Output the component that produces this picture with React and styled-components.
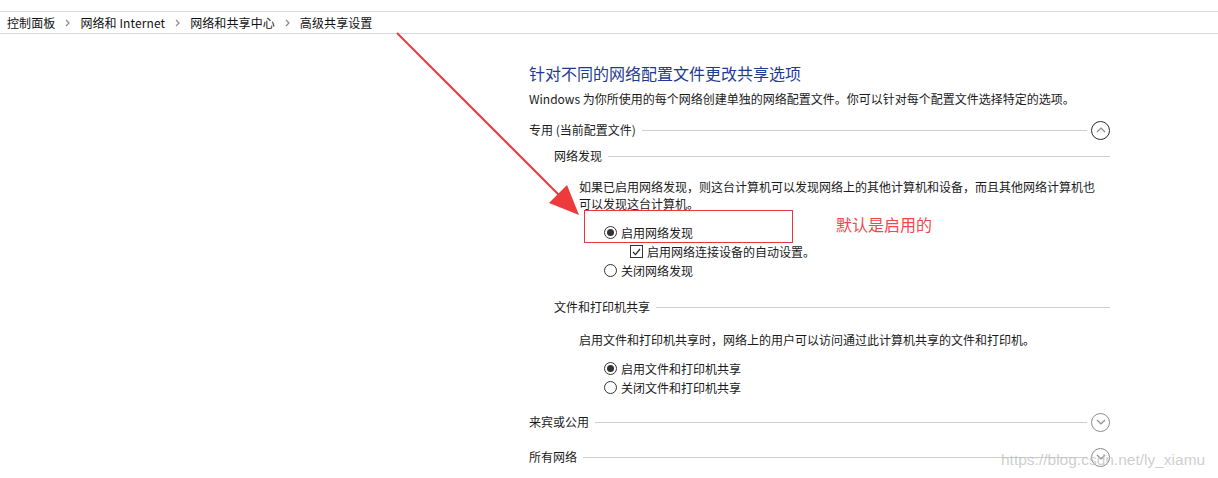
import React from 'react';
import styled, { createGlobalStyle } from 'styled-components';

const GlobalStyle = createGlobalStyle`
	html, body {
		margin: 0;
		padding: 0;
		background: #fff;
	}
	body {
		font-family: "Noto Sans CJK SC", "Noto Sans", "Liberation Sans", sans-serif;
		font-size: 12px;
		color: #1a1a1a;
	}
`;

const Page = styled.div`
	position: relative;
	width: 1218px;
	height: 478px;
	overflow: hidden;
`;

const Breadcrumb = styled.nav`
	margin-top: 11px;
	height: 21px;
	border-top: 1px solid #d9d9d9;
	border-bottom: 1px solid #d9d9d9;
	display: flex;
	align-items: center;
	padding-left: 7px;
	font-size: 12px;
	color: #111;
`;

const Crumb = styled.span`
	line-height: 20px;
	letter-spacing: 0.1px;
`;

const CrumbSep = styled.span`
	display: inline-flex;
	align-items: center;
	padding: 0 10px 0 10px;
	color: #8a8a8a;
`;

const Content = styled.main`
	margin-left: 529px;
	width: 581px;
`;

const Title = styled.h1`
	margin: 28px 0 0;
	font-size: 16px;
	font-weight: normal;
	line-height: 22px;
	color: #1f3a93;
`;

const Desc = styled.p`
	margin: 6px 0 0;
	line-height: 18px;
	white-space: nowrap;
`;

const Header = styled.div`
	display: flex;
	align-items: center;
	height: 20px;
	margin-top: ${(p) => p.$top}px;
	padding-left: ${(p) => p.$indent || 0}px;
`;

const HeaderLabel = styled.span`
	white-space: nowrap;
	line-height: 20px;
`;

const Rule = styled.span`
	flex: 1;
	height: 1px;
	background: #cfcfcf;
	margin-left: 6px;
`;

const Toggle = styled.span`
	width: 17px;
	height: 17px;
	margin-left: 4px;
	border-radius: 50%;
	border: 1.5px solid ${(p) => (p.$open ? '#2b2b2b' : '#8d8d8d')};
	display: flex;
	align-items: center;
	justify-content: center;
	flex-shrink: 0;
`;

const Para = styled.p`
	margin: ${(p) => p.$top}px 0 0 50px;
	line-height: 17px;
`;

const Options = styled.div`
	position: relative;
	margin: ${(p) => p.$top}px 0 0 75px;
`;

const Option = styled.label`
	display: flex;
	align-items: center;
	height: 19px;
	padding-left: ${(p) => p.$indent || 0}px;
	white-space: nowrap;
`;

const Radio = styled.span`
	width: 11px;
	height: 11px;
	border-radius: 50%;
	border: 1px solid #333;
	margin-right: 4px;
	display: flex;
	align-items: center;
	justify-content: center;
	&::after {
		content: '';
		width: 7px;
		height: 7px;
		border-radius: 50%;
		background: #333;
		display: ${(p) => (p.$checked ? 'block' : 'none')};
	}
`;

const Check = styled.span`
	width: 11px;
	height: 11px;
	border: 1px solid #333;
	margin-right: 4px;
	display: flex;
	align-items: center;
	justify-content: center;
`;

const Highlight = styled.div`
	position: absolute;
	left: -20px;
	top: -13px;
	width: 207px;
	height: 31px;
	border: 1px solid #e8383d;
	pointer-events: none;
`;

const Note = styled.span`
	position: absolute;
	left: 232px;
	top: -9px;
	font-size: 16px;
	line-height: 20px;
	color: #f2484b;
	white-space: nowrap;
`;

const Sub = styled.div`
	padding-left: 25px;
`;

const Arrow = styled.svg`
	position: absolute;
	left: 0;
	top: 0;
	pointer-events: none;
`;

const Watermark = styled.span`
	position: absolute;
	left: 1001px;
	top: 450px;
	font-family: "Liberation Sans", Arial, sans-serif;
	font-size: 15.5px;
	line-height: 20px;
	color: rgba(190, 190, 190, 0.75);
	white-space: nowrap;
`;

function Chevron() {
	return (
		<svg width="5" height="8" viewBox="0 0 5 8">
			<path d="M1 1l3 3-3 3" fill="none" stroke="currentColor" strokeWidth="1.2" />
		</svg>
	);
}

function CircleToggle({ open }) {
	return (
		<Toggle $open={open}>
			<svg width="10" height="6" viewBox="0 0 10 6">
				<path
					d={open ? 'M1 5l4-4 4 4' : 'M1 1l4 4 4-4'}
					fill="none"
					stroke={open ? '#8a8a8a' : '#8d8d8d'}
					strokeWidth="1.2"
				/>
			</svg>
		</Toggle>
	);
}

function CheckMark() {
	return (
		<svg width="9" height="8" viewBox="0 0 9 8">
			<path d="M1 4l2.5 2.6L8 1" fill="none" stroke="#222" strokeWidth="1.2" />
		</svg>
	);
}

const crumbs = ['控制面板', '网络和 Internet', '网络和共享中心', '高级共享设置'];

export default function App() {
	return (
		<Page>
			<GlobalStyle />
			<Breadcrumb>
				{crumbs.map((c, i) => (
					<React.Fragment key={c}>
						{i > 0 && (
							<CrumbSep>
								<Chevron />
							</CrumbSep>
						)}
						<Crumb>{c}</Crumb>
					</React.Fragment>
				))}
			</Breadcrumb>

			<Content>
				<Title>针对不同的网络配置文件更改共享选项</Title>
				<Desc>Windows 为你所使用的每个网络创建单独的网络配置文件。你可以针对每个配置文件选择特定的选项。</Desc>

				<Header $top={12}>
					<HeaderLabel>专用 (当前配置文件)</HeaderLabel>
					<Rule />
					<CircleToggle open />
				</Header>

				<Sub>
					<Header $top={6}>
						<HeaderLabel>网络发现</HeaderLabel>
						<Rule />
					</Header>
				</Sub>
				<Para $top={12}>
					如果已启用网络发现，则这台计算机可以发现网络上的其他计算机和设备，而且其他网络计算机也
					<br />
					可以发现这台计算机。
				</Para>
				<Options $top={11}>
					<Highlight />
					<Note>默认是启用的</Note>
					<Option>
						<Radio $checked />
						启用网络发现
					</Option>
					<Option $indent={26}>
						<Check>
							<CheckMark />
						</Check>
						启用网络连接设备的自动设置。
					</Option>
					<Option>
						<Radio />
						关闭网络发现
					</Option>
				</Options>

				<Sub>
					<Header $top={17}>
						<HeaderLabel>文件和打印机共享</HeaderLabel>
						<Rule />
					</Header>
				</Sub>
				<Para $top={14}>启用文件和打印机共享时，网络上的用户可以访问通过此计算机共享的文件和打印机。</Para>
				<Options $top={11}>
					<Option>
						<Radio $checked />
						启用文件和打印机共享
					</Option>
					<Option>
						<Radio />
						关闭文件和打印机共享
					</Option>
				</Options>

				<Header $top={15}>
					<HeaderLabel>来宾或公用</HeaderLabel>
					<Rule />
					<CircleToggle />
				</Header>
				<Header $top={15}>
					<HeaderLabel>所有网络</HeaderLabel>
					<Rule />
					<CircleToggle />
				</Header>
			</Content>

			<Arrow width="1218" height="478">
				<line x1="397" y1="33" x2="563" y2="199" stroke="#ee3a3c" strokeWidth="2" />
				<polygon points="579,215 549,203 567,185" fill="#ee3a3c" />
			</Arrow>
			<Watermark>https://blog.csdn.net/ly_xiamu</Watermark>
		</Page>
	);
}
